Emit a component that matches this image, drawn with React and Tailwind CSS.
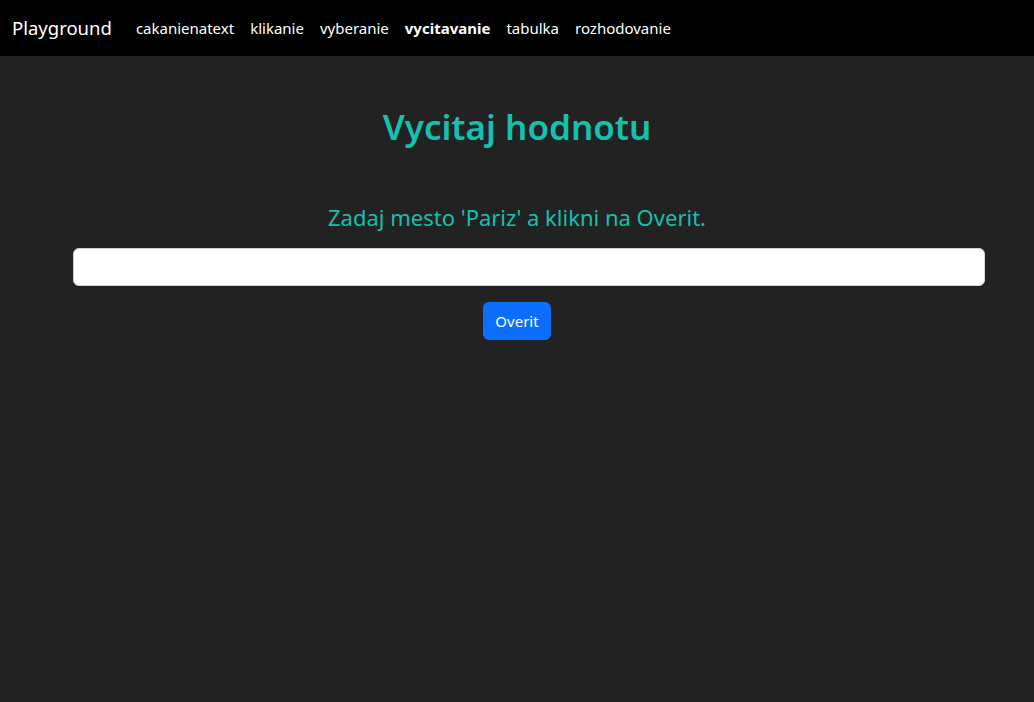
import React, { useState } from "react";

const links = ["cakanienatext", "klikanie", "vyberanie", "vycitavanie", "tabulka", "rozhodovanie"];

const App = () => {
  const [city, setCity] = useState("");

  return (
    <div className="min-h-[702px] bg-[#222222] font-['Segoe_UI','Noto_Sans',sans-serif]">
      {/* Navbar */}
      <nav className="h-14 bg-black flex items-center px-3">
        <span className="text-white text-[18.5px] mr-4">Playground</span>
        <div className="flex items-center">
          {links.map((l) => (
            <a
              key={l}
              href="#"
              className={
                l === "vycitavanie"
                  ? "px-2 text-white text-[15px] font-bold"
                  : "px-2 text-white text-[15px]"
              }
            >
              {l}
            </a>
          ))}
        </div>
      </nav>

      <div className="mx-[49px] flex flex-col items-center">
        <h1 className="mt-[49px] text-[35px] font-semibold text-[#17bfae] leading-tight">
          Vycitaj hodnotu
        </h1>
        <h4 className="mt-[55px] text-[22px] text-[#17bfae] leading-tight">
          Zadaj mesto 'Pariz' a klikni na Overit.
        </h4>
        <div className="w-full pl-6">
          <input
            type="text"
            value={city}
            onChange={(e) => setCity(e.target.value)}
            className="mt-[17px] w-full h-[38px] bg-white rounded-md border border-[#ced4da] px-3 outline-none"
          />
        </div>
        <button className="mt-4 h-[38px] px-3 bg-[#0d6efd] text-white text-[15px] rounded-md">
          Overit
        </button>
      </div>
    </div>
  );
};

export default App;
